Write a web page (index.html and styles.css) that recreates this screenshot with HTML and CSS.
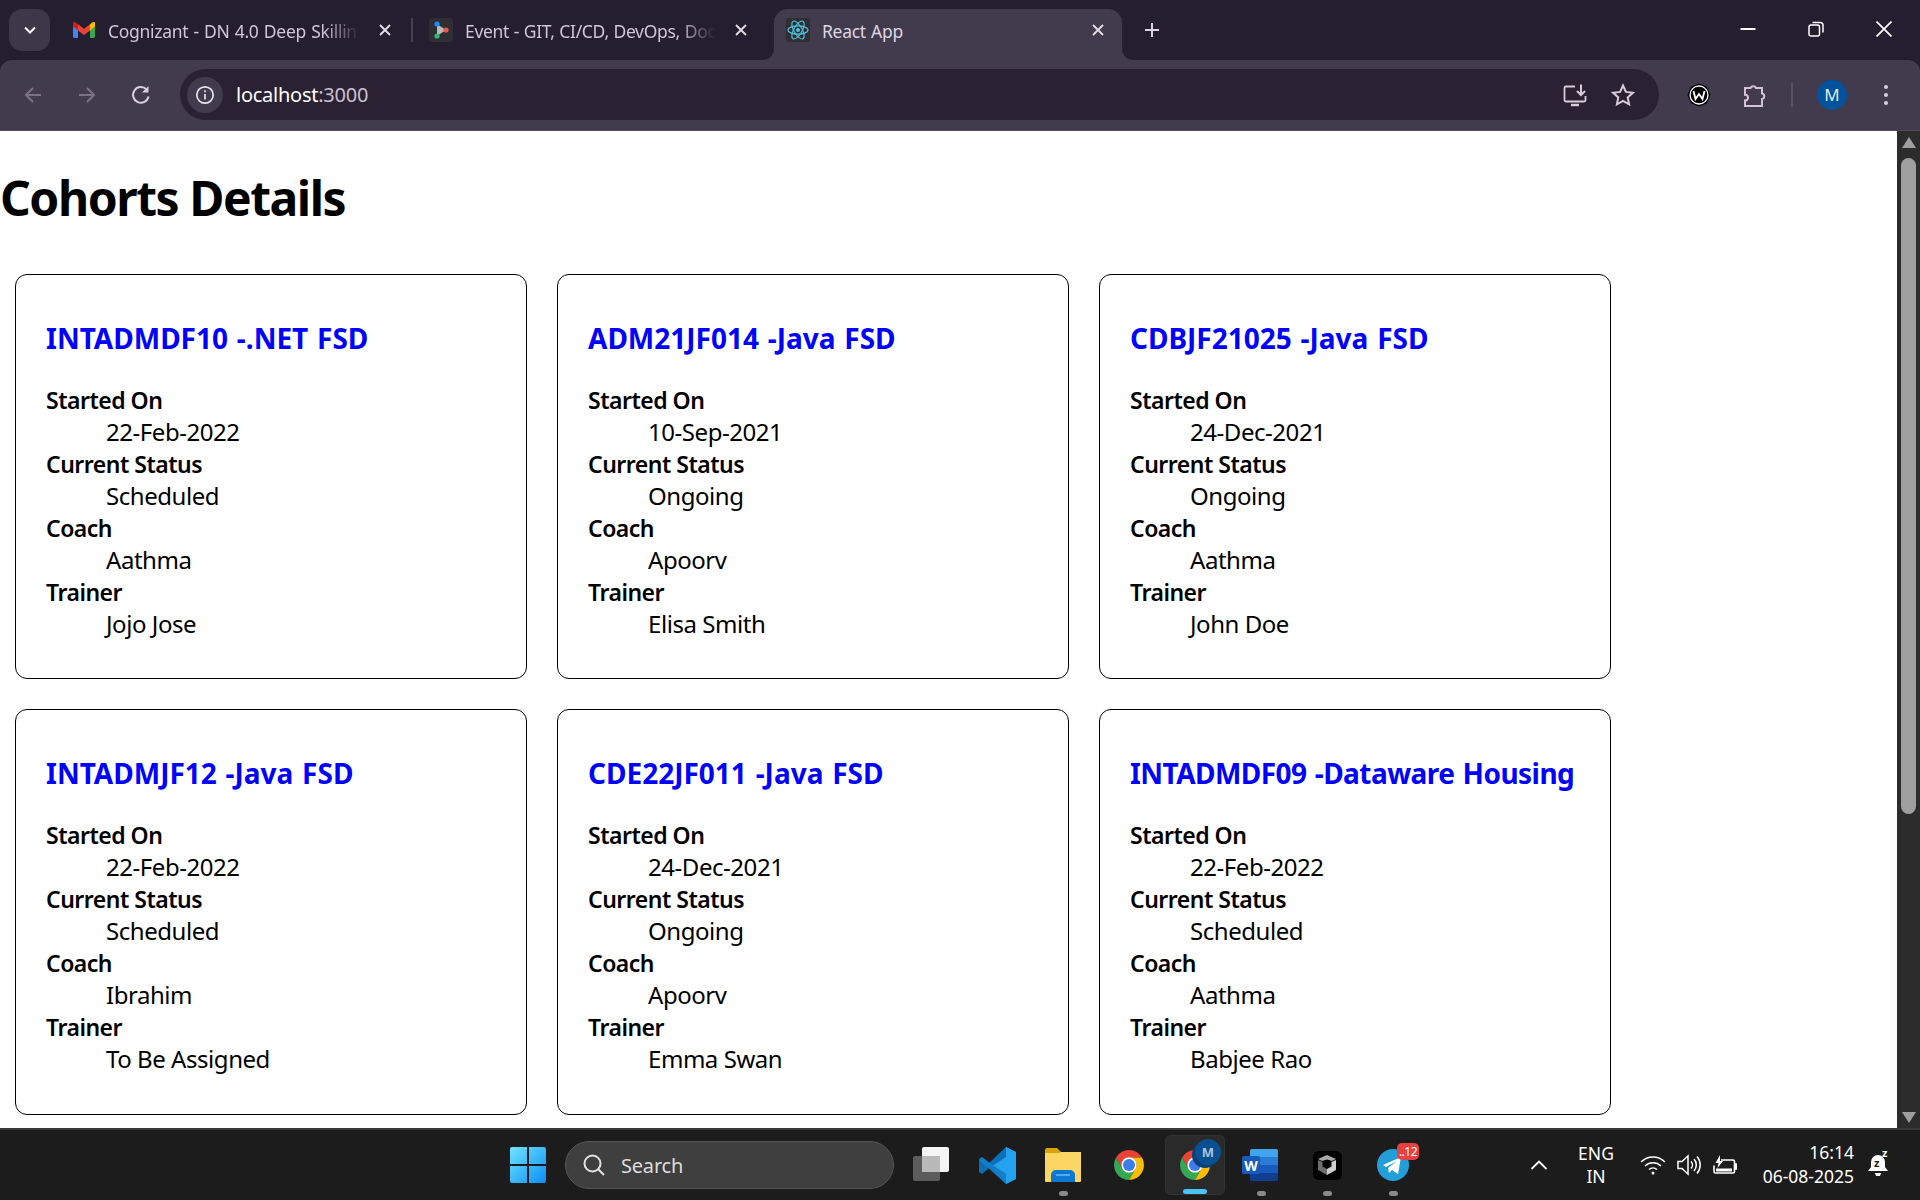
FILE: index.html
```html
<!DOCTYPE html>
<html lang="en">
<head>
<meta charset="utf-8">
<title>React App</title>
<link rel="stylesheet" href="styles.css">
</head>
<body>
<svg class="defs" width="0" height="0" aria-hidden="true">
  <defs>
    <symbol id="chrome" viewBox="0 0 48 48">
      <path fill="#ea4335" d="M6.7 14A20 20 0 0 1 41.3 14H24A10 10 0 0 0 15.34 29Z"/>
      <path fill="#34a853" d="M6.7 14A20 20 0 0 0 24 44L32.66 29A10 10 0 0 1 15.34 29Z"/>
      <path fill="#fbbc04" d="M41.3 14A20 20 0 0 1 24 44L32.66 29A10 10 0 0 0 24 14Z"/>
      <circle cx="24" cy="24" r="10.2" fill="#fff"/>
      <circle cx="24" cy="24" r="8" fill="#3b7bea"/>
    </symbol>
    <symbol id="close" viewBox="0 0 14 14">
      <path d="M2 2l10 10M12 2L2 12" fill="none" stroke="currentColor" stroke-width="1.8"/>
    </symbol>
  </defs>
</svg>
<div class="window">
  <header class="browser">
    <div class="tabstrip">
      <button class="tab-search">
        <svg width="16" height="16" viewBox="0 0 16 16"><path d="M3 5.500l5 5 5-5" fill="none" stroke="#fff" stroke-width="2"/></svg>
      </button>
      <div class="tab">
        <svg class="favicon-gmail" width="22" height="16" viewBox="0 0 22 16">
          <path fill="#4285f4" d="M0 3v11.500A1.500 1.500 0 0 0 1.500 16H5V7.500z"/>
          <path fill="#34a853" d="M22 3v11.500A1.500 1.500 0 0 1 20.500 16H17V7.500z"/>
          <path fill="#ea4335" d="M5 2.200V8.500l6 4.500 6-4.500V2.200l-6 4.500z"/>
          <path fill="#c5221f" d="M0 3.200V4.500L5 8.500V2.200L3 .700A1.900 1.900 0 0 0 0 3.200z"/>
          <path fill="#fbbc04" d="M22 3.200V4.500L17 8.500V2.200L19 .700A1.900 1.900 0 0 1 22 3.200z"/>
        </svg>
        <span class="tab-title">Cognizant - DN 4.0 Deep Skillin</span>
        <svg class="tab-close" width="14" height="14"><use href="#close"/></svg>
      </div>
      <span class="tab-sep"></span>
      <div class="tab tab-second">
        <span class="favicon-box">
          <svg width="20" height="20" viewBox="0 0 20 20">
            <path d="M6 4l9 6-9 6z" fill="#b9b9b9"/>
            <circle cx="6" cy="4" r="2.600" fill="#1a8cff"/>
            <circle cx="15" cy="10" r="2.600" fill="#e8584f"/>
            <circle cx="6" cy="16" r="2.600" fill="#2fb67c"/>
          </svg>
        </span>
        <span class="tab-title">Event - GIT, CI/CD, DevOps, Doc</span>
        <svg class="tab-close" width="14" height="14"><use href="#close"/></svg>
      </div>
      <div class="tab tab-active">
        <span class="favicon-box">
          <svg width="22" height="24" viewBox="0 0 24 24" fill="none" stroke="#4fc3e0" stroke-width="1.300">
            <ellipse cx="12" cy="12" rx="11" ry="4.500"/>
            <ellipse cx="12" cy="12" rx="11" ry="4.500" transform="rotate(60 12 12)"/>
            <ellipse cx="12" cy="12" rx="11" ry="4.500" transform="rotate(120 12 12)"/>
            <circle cx="12" cy="12" r="2.200" fill="#4fc3e0" stroke="none"/>
          </svg>
        </span>
        <span class="tab-title">React App</span>
        <svg class="tab-close" width="14" height="14"><use href="#close"/></svg>
      </div>
      <button class="new-tab">
        <svg width="18" height="18" viewBox="0 0 18 18"><path d="M9 2v14M2 9h14" stroke="#dcd3e2" stroke-width="2"/></svg>
      </button>
      <div class="window-controls">
        <span class="win-btn"><svg width="16" height="16" viewBox="0 0 16 16"><path d="M.500 8h15" stroke="#fff" stroke-width="2"/></svg></span>
        <span class="win-btn"><svg width="16" height="16" viewBox="0 0 16 16" fill="none" stroke="#fff" stroke-width="1.500"><rect x="1" y="4" width="10.500" height="11" rx="2"/><path d="M4.500 1.500h7.500a3 3 0 0 1 3 3v7"/></svg></span>
        <span class="win-btn"><svg width="16" height="16" viewBox="0 0 16 16"><path d="M.500.500l15 15M15.500.500l-15 15" stroke="#fff" stroke-width="1.700"/></svg></span>
      </div>
    </div>
    <div class="toolbar">
      <span class="tool-btn">
        <svg width="20" height="20" viewBox="0 0 20 20" fill="none" stroke="#7b7385" stroke-width="2"><path d="M18 10H3M10 3l-7 7 7 7"/></svg>
      </span>
      <span class="tool-btn">
        <svg width="20" height="20" viewBox="0 0 20 20" fill="none" stroke="#7b7385" stroke-width="2"><path d="M2 10h15M10 3l7 7-7 7"/></svg>
      </span>
      <span class="tool-btn">
        <svg width="20" height="20" viewBox="0 0 20 20" fill="none" stroke="#d8cfdf" stroke-width="2"><path d="M17.500 11.500A7.800 7.800 0 1 1 15.500 4.500"/><path d="M17.500 1V7.500H11z" stroke="none" fill="#d8cfdf"/></svg>
      </span>
      <div class="omnibox">
        <span class="site-info">
          <svg width="20" height="20" viewBox="0 0 20 20" fill="none" stroke="#e8e2ec" stroke-width="1.700"><circle cx="10" cy="10" r="8.200"/><path d="M10 9v5.500M10 5.200v2"/></svg>
        </span>
        <span class="url"><span class="url-host">localhost</span>:3000</span>
        <span class="omni-actions">
          <span class="omni-btn">
            <svg width="24" height="24" viewBox="0 0 24 24" fill="none" stroke="#d6cdd9" stroke-width="1.800"><path d="M12 3.500H3a1.500 1.500 0 0 0-1.500 1.500v12a1.500 1.500 0 0 0 1.500 1.500h18a1.500 1.500 0 0 0 1.500-1.500v-4"/><path d="M8 22h8" stroke-width="2.500"/><path d="M18 1.500v10M14 8l4 4 4-4" stroke-width="2"/></svg>
          </span>
          <span class="omni-btn">
            <svg width="24" height="24" viewBox="0 0 24 24" fill="none" stroke="#d6cdd9" stroke-width="2"><path d="M12 2.500l2.900 6.400 7 .8-5.200 4.700 1.400 6.900-6.100-3.500-6.100 3.500 1.400-6.900L2.100 9.700l7-.8z"/></svg>
          </span>
        </span>
      </div>
      <span class="ext-btn ext-first">
        <svg width="24" height="24" viewBox="0 0 24 24"><path d="M12 .500l8 3.300 3.500 8.200-3.500 8.200-8 3.300-8-3.300L.500 12 4 3.800z" fill="#000"/><circle cx="12" cy="12" r="9" fill="none" stroke="#fff" stroke-width="1.300"/><path d="M6.500 8l2 8 3.500-5 3.500 5 2-8" fill="none" stroke="#fff" stroke-width="1.800"/></svg>
      </span>
      <span class="ext-btn ext-puzzle">
        <svg width="24" height="26" viewBox="0 0 24 26" fill="none" stroke="#d0c4d8" stroke-width="2"><path d="M2 6h5.500a3 3 0 0 1 5.500 0H19v5.500a2.800 2.800 0 0 1 0 5.500V24H2v-5.500a3 3 0 0 0 3-2.700 3 3 0 0 0-3-3z"/></svg>
      </span>
      <span class="tool-sep"></span>
      <span class="avatar">M</span>
      <span class="menu-dots"><i></i><i></i><i></i></span>
    </div>
  </header>

  <div class="viewport">
    <main class="page">
      <h1 class="page-title">Cohorts Details</h1>
      <div class="cards">
        <section class="card">
          <h2 class="card-title">INTADMDF10 -.NET FSD</h2>
          <dl class="details">
            <dt>Started On</dt><dd>22-Feb-2022</dd>
            <dt>Current Status</dt><dd>Scheduled</dd>
            <dt>Coach</dt><dd>Aathma</dd>
            <dt>Trainer</dt><dd>Jojo Jose</dd>
          </dl>
        </section>
        <section class="card">
          <h2 class="card-title">ADM21JF014 -Java FSD</h2>
          <dl class="details">
            <dt>Started On</dt><dd>10-Sep-2021</dd>
            <dt>Current Status</dt><dd>Ongoing</dd>
            <dt>Coach</dt><dd>Apoorv</dd>
            <dt>Trainer</dt><dd>Elisa Smith</dd>
          </dl>
        </section>
        <section class="card">
          <h2 class="card-title">CDBJF21025 -Java FSD</h2>
          <dl class="details">
            <dt>Started On</dt><dd>24-Dec-2021</dd>
            <dt>Current Status</dt><dd>Ongoing</dd>
            <dt>Coach</dt><dd>Aathma</dd>
            <dt>Trainer</dt><dd>John Doe</dd>
          </dl>
        </section>
        <section class="card">
          <h2 class="card-title">INTADMJF12 -Java FSD</h2>
          <dl class="details">
            <dt>Started On</dt><dd>22-Feb-2022</dd>
            <dt>Current Status</dt><dd>Scheduled</dd>
            <dt>Coach</dt><dd>Ibrahim</dd>
            <dt>Trainer</dt><dd>To Be Assigned</dd>
          </dl>
        </section>
        <section class="card">
          <h2 class="card-title">CDE22JF011 -Java FSD</h2>
          <dl class="details">
            <dt>Started On</dt><dd>24-Dec-2021</dd>
            <dt>Current Status</dt><dd>Ongoing</dd>
            <dt>Coach</dt><dd>Apoorv</dd>
            <dt>Trainer</dt><dd>Emma Swan</dd>
          </dl>
        </section>
        <section class="card">
          <h2 class="card-title card-title-long">INTADMDF09 -Dataware Housing</h2>
          <dl class="details">
            <dt>Started On</dt><dd>22-Feb-2022</dd>
            <dt>Current Status</dt><dd>Scheduled</dd>
            <dt>Coach</dt><dd>Aathma</dd>
            <dt>Trainer</dt><dd>Babjee Rao</dd>
          </dl>
        </section>
      </div>
    </main>
    <aside class="scrollbar">
      <span class="arrow-up"></span>
      <span class="thumb"></span>
      <span class="arrow-down"></span>
    </aside>
  </div>

  <footer class="taskbar">
    <span class="task-start">
      <svg width="36" height="36" viewBox="0 0 36 36">
        <defs>
          <linearGradient id="win" x1="0" y1="0" x2="1" y2="1"><stop offset="0" stop-color="#6fe3ff"/><stop offset="1" stop-color="#0c8ef5"/></linearGradient>
        </defs>
        <path fill="url(#win)" d="M2 0h15v17H0V2a2 2 0 0 1 2-2zM19 0h15a2 2 0 0 1 2 2v15H19zM0 19h17v17H2a2 2 0 0 1-2-2zM19 19h17v15a2 2 0 0 1-2 2H19z"/>
      </svg>
    </span>
    <div class="task-search">
      <svg width="24" height="24" viewBox="0 0 24 24" fill="none" stroke="#e4e4e4" stroke-width="2"><circle cx="10.500" cy="10.500" r="8"/><path d="M16 16l6 6"/></svg>
      <span>Search</span>
    </div>
    <span class="task-app">
      <svg width="36" height="36" viewBox="0 0 36 36">
        <rect x="0" y="9" width="27" height="25" rx="2" fill="#5c5c5c"/>
        <rect x="9" y="0" width="27" height="25" rx="2" fill="#f4f4f4"/>
        <rect x="9" y="9" width="18" height="16" fill="#b9b9b9"/>
      </svg>
    </span>
    <span class="task-app">
      <svg width="37" height="37" viewBox="0 0 37 37">
        <path fill="#0a6fb8" d="M27 0l10 5v27l-10 5L10 21 3 27l-3-2V12l3-2 7 6z"/>
        <path fill="#23a3ee" d="M27 0l10 5v27l-10 5zM27 10L14 18.500 27 27z"/>
        <path fill="#1b8ad4" d="M3 10l24 17v10L0 13z" opacity=".55"/>
      </svg>
    </span>
    <span class="task-app has-dot">
      <svg width="36" height="34" viewBox="0 0 36 34">
        <path fill="#d9a406" d="M0 2a2 2 0 0 1 2-2h10l4 4h20v6H0z"/>
        <path fill="#fcd665" d="M0 5h14l2-1h20v29a1 1 0 0 1-1 1H1a1 1 0 0 1-1-1z"/>
        <path fill="#0d78d0" d="M6 34v-7a5 5 0 0 1 5-5h14a5 5 0 0 1 5 5v7z"/>
        <path fill="#54a7ea" d="M11 26h14v2H11z"/>
      </svg>
    </span>
    <span class="task-app"><svg width="36" height="36"><use href="#chrome"/></svg></span>
    <span class="task-app is-active">
      <span class="chrome-wrap">
        <svg width="36" height="36"><use href="#chrome"/></svg>
        <span class="chrome-badge">M</span>
      </span>
    </span>
    <span class="task-app has-dot">
      <span class="word">
        <svg width="28" height="32" viewBox="0 0 28 32">
          <path fill="#41a5ee" d="M2 0h24a2 2 0 0 1 2 2v6H0V2a2 2 0 0 1 2-2z"/>
          <path fill="#2b7cd3" d="M0 8h28v8H0z"/>
          <path fill="#185abd" d="M0 16h28v8H0z"/>
          <path fill="#103f91" d="M0 24h28v6a2 2 0 0 1-2 2H2a2 2 0 0 1-2-2z"/>
        </svg>
        <span class="word-badge">W</span>
      </span>
    </span>
    <span class="task-app has-dot">
      <span class="cube">
        <svg width="18" height="20" viewBox="0 0 18 20">
          <path fill="#a8a8a8" d="M9 0l9 4-4 2-5-1.500L4 6 0 4z"/>
          <path fill="#6e6e6e" d="M0 5l4.500 2v4.500L9 14v6L0 15z"/>
          <path fill="#cfcfcf" d="M18 5l-4.500 2v4.500L9 14v6l9-5z"/>
        </svg>
      </span>
    </span>
    <span class="task-app has-dot">
      <span class="telegram">
        <svg width="32" height="32" viewBox="0 0 32 32">
          <circle cx="16" cy="16" r="16" fill="#229ed9"/>
          <path fill="#fff" d="M6 16l18-8-3 17-6-4-3 3-1-5 9-7-11 6z"/>
        </svg>
        <span class="tele-badge">..12</span>
      </span>
    </span>
    <div class="tray">
      <svg class="tray-chevron" width="18" height="12" viewBox="0 0 18 12"><path d="M1.500 10L9 2.500 16.500 10" fill="none" stroke="#fff" stroke-width="1.800"/></svg>
      <span class="lang">ENG<br>IN</span>
      <svg class="tray-wifi" width="26" height="20" viewBox="0 0 26 20" fill="none" stroke="#fff" stroke-width="1.600"><path d="M1 7a17 17 0 0 1 24 0M5 11a11.500 11.500 0 0 1 16 0M9 14.500a6 6 0 0 1 8 0"/><circle cx="13" cy="18" r="1.500" fill="#fff" stroke="none"/></svg>
      <svg class="tray-sound" width="24" height="22" viewBox="0 0 24 22" fill="none" stroke="#fff" stroke-width="1.500"><path d="M1 7.500h4L11 2v18l-6-5.500H1z"/><path d="M14 7.500a5 5 0 0 1 0 7M17 5a9 9 0 0 1 0 12M20 2.500a13 13 0 0 1 0 17"/></svg>
      <svg class="tray-batt" width="24" height="20" viewBox="0 0 24 20" fill="none" stroke="#fff" stroke-width="1.600"><path d="M8 5h12a1.500 1.500 0 0 1 1.500 1.500v10a1.500 1.500 0 0 1-1.500 1.500H2.500A1.500 1.500 0 0 1 1 16.500v-6"/><path d="M22 9h1.500v5H22" fill="#fff"/><path d="M7 0L2.500 8h3L4.500 13 10 6H7z" fill="#fff" stroke="none"/><path d="M3 15h16" stroke-width="3"/></svg>
      <span class="clock"><span>16:14</span><span>06-08-2025</span></span>
      <span class="bell">
        <svg width="20" height="24" viewBox="0 0 20 24"><path fill="#fff" d="M10 2a7 7 0 0 0-7 7v5l-3 4h20l-3-4V9a7 7 0 0 0-7-7zM7 20h6l-1 3H8z"/></svg>
        <span class="bell-z">z</span>
        <span class="bell-z2">z</span>
      </span>
    </div>
  </footer>
</div>
</body>
</html>
```
FILE: styles.css
```css
* { box-sizing: border-box; }
html, body { margin: 0; padding: 0; height: 100%; overflow: hidden; }
body { font-family: "Noto Sans", "Open Sans", sans-serif; background: #fff; color: #000; }
.defs { display: block; height: 0; }
.window { display: flex; flex-direction: column; height: 1200px; width: 1920px; overflow: hidden; }

/* Browser chrome */
.browser { flex: none; height: 131px; background: #251e30; color: #d8d0de; }
.tabstrip { display: flex; height: 60px; align-items: flex-end; }
.tab-search { flex: none; align-self: flex-start; margin: 9px 11px 0 9px; width: 41px; height: 42px; border: 0; border-radius: 13px; background: #3e3649; display: flex; align-items: center; justify-content: center; padding: 0; }
.tab { position: relative; flex: none; display: flex; align-items: center; width: 348px; height: 51px; padding: 0 17px 9px 12px; font-size: 17.5px; letter-spacing: -.3px; word-spacing: 1px; color: #cfc6d6; }
.favicon-gmail { flex: none; width: 22px; height: 16px; }
.favicon-box { flex: none; display: flex; align-items: center; justify-content: center; width: 24px; height: 24px; border-radius: 3px; background: #2f2f33; }
.tab-title { flex: 1; min-width: 0; margin-left: 13px; padding-top: 2px; white-space: nowrap; overflow: hidden; -webkit-mask-image: linear-gradient(to right, #000 85%, transparent 100%); mask-image: linear-gradient(to right, #000 85%, transparent 100%); }
.tab-close { flex: none; margin-left: 18px; color: #e6dfea; }
.tab-sep { flex: none; align-self: flex-start; width: 2px; height: 24px; margin: 18px 4px 0 2px; background: #48404f; }
.tab-second { word-spacing: .4px; }
.tab-second .tab-title { margin-left: 12px; }
.tab-active { margin-left: 9px; background: #423a4d; border-radius: 14px 14px 0 0; color: #ddd6e3; }
.tab-active .tab-title { margin-left: 12px; -webkit-mask-image: none; mask-image: none; }
.tab-active::before, .tab-active::after { content: ""; position: absolute; bottom: 0; width: 12px; height: 12px; }
.tab-active::before { left: -12px; background: radial-gradient(circle at 0 0, transparent 12px, #423a4d 12.5px); }
.tab-active::after { right: -12px; background: radial-gradient(circle at 100% 0, transparent 12px, #423a4d 12.5px); }
.new-tab { flex: none; align-self: flex-start; margin: 21px 0 0 21px; padding: 0; width: 18px; height: 18px; border: 0; background: none; }
.window-controls { display: flex; align-self: flex-start; margin-left: auto; margin-right: 2px; }
.win-btn { width: 68px; height: 58px; display: flex; align-items: center; justify-content: center; }

.toolbar { display: flex; align-items: center; height: 71px; padding-left: 6px; padding-bottom: 1px; background: #423a4d; border-bottom: 1px solid #54495f; border-radius: 12px 12px 0 0; }
.tool-btn { flex: none; width: 54px; display: flex; justify-content: center; }
.omnibox { flex: none; display: flex; align-items: center; width: 1479px; height: 51px; margin-left: 12px; padding: 0 12px 0 7px; border-radius: 26px; background: #2a2233; }
.site-info { flex: none; width: 36px; height: 36px; border-radius: 50%; background: #423a4d; display: flex; align-items: center; justify-content: center; }
.url { margin-left: 13px; font-size: 20px; letter-spacing: -.25px; color: #c9c0d0; }
.url-host { color: #fff; }
.omni-actions { margin-left: auto; display: flex; }
.omni-btn { width: 48px; display: flex; justify-content: center; }
.ext-btn { flex: none; width: 55px; display: flex; justify-content: center; }
.ext-first { margin-left: 12px; }
.ext-puzzle { padding-left: 2px; }
.tool-sep { flex: none; width: 2px; height: 24px; margin: 0 24px 0 10px; background: #5b5266; }
.avatar { flex: none; width: 30px; height: 30px; border-radius: 50%; background: #00539c; color: #dfeaf5; font-size: 17px; display: flex; align-items: center; justify-content: center; }
.menu-dots { flex: none; margin-left: 37px; display: flex; flex-direction: column; gap: 4px; }
.menu-dots i { display: block; width: 4px; height: 4px; border-radius: 50%; background: #d8cfdf; }

/* Page */
.viewport { flex: 1; min-height: 0; display: flex; background: #fff; }
.page { flex: 1; min-width: 0; overflow: hidden; }
.page-title { margin: 35px 0 29px; font-size: 48px; line-height: 64px; font-weight: 700; letter-spacing: -1.45px; }
.cards { display: flex; flex-wrap: wrap; align-items: flex-start; }
.card { flex: none; width: 512px; height: 405.33px; margin: 15px; padding: 30px; border: 1px solid #000; border-radius: 12px; }
.card-title { margin: 14px 0 27px; font-size: 28px; line-height: 38px; font-weight: 700; color: #00f; letter-spacing: 0; word-spacing: 1.5px; white-space: nowrap; }
.card-title-long { letter-spacing: -.55px; }
.details { margin: 0 0 7px; font-size: 24px; line-height: 32px; letter-spacing: -.45px; }
.details dt { font-size: 23px; font-weight: 600; letter-spacing: -.5px; }
.details dd { margin: 0 0 0 60px; }

.scrollbar { flex: none; width: 23px; background: #2c2c2c; display: flex; flex-direction: column; align-items: center; padding-top: 6px; padding-bottom: 5px; }
.arrow-up { width: 0; height: 0; border-left: 7px solid transparent; border-right: 7px solid transparent; border-bottom: 11px solid #9f9f9f; }
.thumb { width: 15px; height: 656px; margin-top: 10px; border-radius: 8px; background: #9f9f9f; }
.arrow-down { margin-top: auto; width: 0; height: 0; border-left: 7px solid transparent; border-right: 7px solid transparent; border-top: 11px solid #9f9f9f; }

/* Taskbar */
.taskbar { flex: none; display: flex; align-items: center; height: 72px; padding-left: 510px; background: #1c1c1c; border-top: 2px solid #3a3a3a; color: #fff; font-family: "Noto Sans", sans-serif; }
.task-start { flex: none; display: flex; width: 55px; }
.task-search { flex: none; display: flex; align-items: center; width: 329px; height: 48px; padding-left: 16px; margin-right: 4px; border-radius: 24px; background: #3f3f3f; border: 1px solid #555; color: #ddd; font-size: 20px; letter-spacing: -.2px; }
.task-search span { margin-left: 15px; }
.task-app { position: relative; flex: none; width: 66px; height: 60px; display: flex; align-items: center; justify-content: center; }
.task-app.has-dot::after { content: ""; position: absolute; left: 29px; bottom: -1px; width: 9px; height: 5px; border-radius: 3px; background: #8a8a8a; }
.is-active { background: #2a2a2a; border-radius: 6px; width: 60px; margin: 0 3px; box-shadow: inset 0 0 0 1px #333; }
.is-active::after { content: ""; position: absolute; left: 18px; bottom: 1px; width: 24px; height: 5px; border-radius: 3px; background: #4cc2ff; }
.chrome-wrap, .word, .telegram { position: relative; display: flex; }
.chrome-badge { position: absolute; right: -8px; top: -8px; width: 26px; height: 26px; border-radius: 50%; background: #0a4f92; box-shadow: -3px 3px 0 #0a3f78; color: #a7c4de; font-size: 13px; font-weight: 700; display: flex; align-items: center; justify-content: center; }
.word { margin-left: 6px; }
.word-badge { position: absolute; left: -8px; top: 7px; width: 18px; height: 18px; border-radius: 2px; background: #185abd; color: #fff; font-size: 14px; font-weight: 700; display: flex; align-items: center; justify-content: center; }
.cube { width: 29px; height: 29px; border-radius: 6px; background: #000; display: flex; align-items: center; justify-content: center; }
.tele-badge { position: absolute; left: 20px; top: -6px; width: 22px; height: 17px; border-radius: 5px; background: #e84142; color: #fff; font-size: 12px; line-height: 17px; text-align: center; letter-spacing: -.5px; }

.tray { flex: 1; display: flex; align-items: center; }
.tray-chevron { flex: none; margin-left: 104px; }
.lang { flex: none; width: 60px; margin-left: 18px; text-align: center; font-size: 17.500px; line-height: 23px; }
.tray-wifi { flex: none; margin-left: 14px; }
.tray-sound { flex: none; margin-left: 11px; }
.tray-batt { flex: none; margin-left: 12px; }
.clock { flex: none; display: flex; flex-direction: column; align-items: flex-end; width: 117px; margin-top: -3px; font-size: 17.500px; line-height: 24px; }
.bell { position: relative; flex: none; display: flex; margin-left: 14px; }
.bell-z { position: absolute; left: 6px; top: 3px; color: #1c1c1c; font-size: 11px; line-height: 14px; font-weight: 700; }
.bell-z2 { position: absolute; left: 14px; top: -6px; color: #fff; font-size: 11px; line-height: 12px; font-weight: 700; }
```
